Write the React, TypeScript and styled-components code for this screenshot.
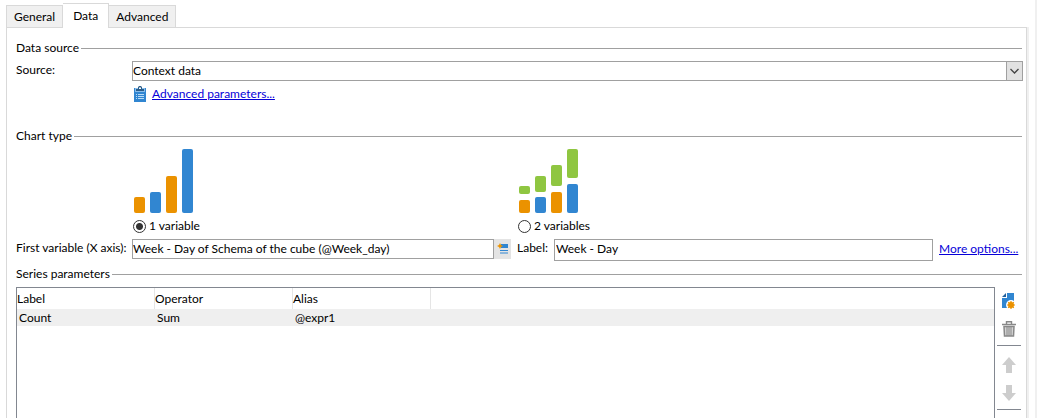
import React, { useState } from 'react';
import styled, { createGlobalStyle, css } from 'styled-components';

const Global = createGlobalStyle`
  *, *::before, *::after { box-sizing: border-box; }
  body {
    margin: 0;
    background: #fff;
    color: #000;
    font: 12px/16px Lato, "Segoe UI", sans-serif;
  }
  button, input, select { font: inherit; color: inherit; margin: 0; }
`;

const Page = styled.main`
  display: flex;
  flex-direction: column;
  height: 100vh;
  padding: 3px 8px 0 6px;
  border-right: 2px solid #f0f0f0;
  overflow: hidden;
`;

const TabList = styled.div`
  display: flex;
  align-items: flex-end;
`;

const Tab = styled.button<{ $active: boolean }>`
  height: 22px;
  padding: 0 7px;
  border: 1px solid #d9d9d9;
  border-bottom: 0;
  border-left-width: 0;
  background: #f0f0f0;
  line-height: 20px;
  white-space: nowrap;

  &:first-child { border-left-width: 1px; }

  ${({ $active }) =>
    $active &&
    css`
      height: 25px;
      margin-bottom: -1px;
      padding: 0 10px;
      background: #fff;
      z-index: 1;
    `}
`;

const Panel = styled.section`
  display: flex;
  flex-direction: column;
  flex: 1;
  min-height: 0;
  padding: 12px 3px 0 9px;
  border: 1px solid #d9d9d9;
  border-bottom: 0;
  box-shadow: 2px 0 0 #f0f0f0;
`;

const Heading = styled.h2`
  display: flex;
  align-items: center;
  gap: 2px;
  margin: 0;
  font-size: 12px;
  font-weight: 400;

  &::after {
    content: "";
    flex: 1;
    height: 1px;
    margin-right: 1px;
    background: #a0a0a0;
  }
`;

const SourceGrid = styled.div`
  display: grid;
  grid-template-columns: 116px minmax(0, 1fr);
  row-gap: 5px;
  margin: 5px 0 26px;
`;

const SelectBox = styled.div`
  position: relative;
  display: flex;
`;

const Select = styled.select`
  flex: 1;
  height: 20px;
  padding: 0 20px 0 0;
  border: 1px solid #a0a0a0;
  border-radius: 0;
  background: #fff;
  appearance: none;
`;

const DropMark = styled.span`
  position: absolute;
  inset: 0 0 0 auto;
  display: flex;
  align-items: center;
  justify-content: center;
  width: 17px;
  border: 1px solid #a0a0a0;
  background: #e1e1e1;
  pointer-events: none;
`;

const IconLink = styled.div`
  display: flex;
  align-items: center;
  gap: 4px;
  grid-column: 2;
`;

const Link = styled.a`
  color: #0600d8;
  text-decoration: underline;
  white-space: nowrap;
`;

const Columns = styled.div`
  display: grid;
  grid-template-columns: minmax(0, 495fr) minmax(0, 506fr);
  column-gap: 6px;
`;

const ChartChoice = styled.label<{ $indent?: boolean }>`
  display: flex;
  flex-direction: column;
  gap: 5px;
  padding: 5px 0 5px ${({ $indent }) => ($indent ? 117 : 1)}px;
`;

const RadioLine = styled.span`
  display: flex;
  align-items: center;
  gap: 3px;
`;

const Radio = styled.input`
  width: 13px;
  height: 13px;
  border: 1px solid #333;
  border-radius: 50%;
  background: #fff;
  appearance: none;

  &:checked {
    background: radial-gradient(circle, #333 3px, #fff 4px);
  }
`;

const Field = styled.div`
  display: flex;
  align-items: flex-start;
`;

const FieldLabel = styled.label<{ $width?: number }>`
  flex: none;
  width: ${({ $width }) => ($width ? `${$width}px` : 'auto')};
  line-height: 18px;
  white-space: nowrap;
`;

const TextInput = styled.input<{ $tall?: boolean }>`
  flex: 1;
  min-width: 0;
  height: ${({ $tall }) => ($tall ? 22 : 20)}px;
  padding: ${({ $tall }) => ($tall ? '0 1px 3px' : '0 0 1px')};
  border: 1px solid #a0a0a0;
`;

const PickButton = styled.button`
  display: flex;
  align-items: center;
  justify-content: center;
  width: 17px;
  height: 20px;
  padding: 0;
  border: 0;
  background: #e4e4e4;
`;

const MoreLink = styled(Link)`
  width: 84px;
  margin-left: 6px;
  line-height: 20px;
`;

const Series = styled.div`
  display: flex;
  flex: 1;
  gap: 2px;
  min-height: 0;
  margin-top: 5px;
`;

const SeriesHeading = styled(Heading)`
  margin-top: 5px;
`;

const TableFrame = styled.div`
  flex: 1;
  border: 1px solid #828790;
  border-bottom: 0;
`;

const Table = styled.table`
  width: 100%;
  border-spacing: 0;
  table-layout: fixed;

  th, td { text-align: left; font-weight: 400; }
  th { height: 21px; padding: 1px 0 0; border-right: 1px solid #e5e5e5; }
  th:last-child { border-right: 0; }
  td { height: 17px; padding: 0 2px; background: #efefef; line-height: 16px; }
`;

const Column = styled.col`
  width: 138px;
`;

const SideBar = styled.div`
  display: flex;
  flex-direction: column;
  align-items: center;
  width: 24px;
  margin-right: 2px;
  padding-top: 6px;
  gap: 12px;
`;

const ToolButton = styled.button`
  display: flex;
  padding: 0;
  border: 0;
  background: none;
`;

const Divider = styled.hr`
  align-self: stretch;
  height: 1px;
  margin: -4px 0 -1px;
  border: 0;
  background: #828790;
`;

const BLUE = '#3186d1';
const ORANGE = '#eb9200';
const GREEN = '#8fc641';

type Bar = [x: number, y: number, height: number, color: string];

const ONE_VARIABLE: Bar[] = [
  [1, 48, 16, ORANGE],
  [17, 43, 21, BLUE],
  [33, 27, 37, ORANGE],
  [49, 0, 64, BLUE],
];

const TWO_VARIABLES: Bar[] = [
  [1, 37, 8, GREEN],
  [1, 51, 13, ORANGE],
  [17, 27, 16, GREEN],
  [17, 48, 16, BLUE],
  [33, 16, 21, GREEN],
  [33, 43, 21, ORANGE],
  [49, 0, 29, GREEN],
  [49, 35, 29, BLUE],
];

const BarChart = ({ bars }: { bars: Bar[] }) => (
  <svg width="60" height="64" aria-hidden="true">
    {bars.map(([x, y, height, color]) => (
      <rect key={`${x}-${y}`} x={x} y={y} width="11" height={height} rx="2" fill={color} />
    ))}
  </svg>
);

const ClipboardIcon = () => (
  <svg width="16" height="16" viewBox="0 0 16 16" aria-hidden="true">
    <path d="M2 2h12v14H2z" fill={BLUE} />
    <path d="M3 2h10v4H3z" fill="#8abdea" />
    <path d="M4 3h2V1.500C6 .5 7 0 8 0s2 .5 2 1.500V3h2v2H4z" fill="#2a5c88" />
    <path d="M7 1.500h2V3H7z" fill="#fff" />
    <path d="M4 8.500h1M6 8.500h6M4 10.500h1M6 10.500h6M4 12.500h1M6 12.500h6" stroke="#b9dcf7" />
  </svg>
);

const PickIcon = () => (
  <svg width="12" height="12" viewBox="0 0 12 12" aria-hidden="true">
    <path d="M4 1h7v4H4z" fill={BLUE} />
    <path d="M3 7.500h8M3 10h8" stroke={BLUE} strokeWidth="1.200" />
    <path d="M3 0l1 2 2 1-2 1-1 2-1-2-2-1 2-1z" fill={ORANGE} />
  </svg>
);

const NewIcon = () => (
  <svg width="16" height="16" viewBox="0 0 16 16" aria-hidden="true">
    <path d="M6 0h7v8L7 11v4H1V5h5z" fill={BLUE} />
    <path d="M1 4L5 0v4z" fill="#1f5f9c" />
    <circle cx="10" cy="12" r="5" fill="#fff" />
    <circle cx="10" cy="12" r="3" fill={ORANGE} />
    <path
      d="M10 8v8M6 12h8M7.200 9.200l5.600 5.600M12.800 9.200l-5.600 5.600"
      stroke={ORANGE}
      strokeWidth="1.200"
    />
  </svg>
);

const TrashIcon = () => (
  <svg width="16" height="16" viewBox="0 0 16 16" fill="none" aria-hidden="true">
    <path d="M1 3.500h14" stroke="#888" strokeWidth="1.500" />
    <path d="M5.500 3V.8h5V3" stroke="#888" strokeWidth="1.400" />
    <path d="M3 5.500h10L12.500 15h-9z" fill="#d4d4d4" stroke="#888" strokeWidth="1.500" />
    <path d="M6 6v9M8 6v9M10 6v9" stroke="#888" />
  </svg>
);

const ArrowIcon = ({ down = false }: { down?: boolean }) => (
  <svg width="16" height="16" viewBox="0 0 16 16" aria-hidden="true">
    <path
      d={down ? 'M5 0h6v8h4l-7 8-7-8h4z' : 'M5 16h6V8h4L8 0 1 8h4z'}
      fill="#cdcdcd"
    />
  </svg>
);

const TABS = ['General', 'Data', 'Advanced'];

export default function App() {
  const [tab, setTab] = useState('Data');
  const [variables, setVariables] = useState(1);

  return (
    <>
      <Global />
      <Page>
        <TabList role="tablist">
          {TABS.map((name) => (
            <Tab
              key={name}
              role="tab"
              aria-selected={tab === name}
              $active={tab === name}
              onClick={() => setTab(name)}
            >
              {name}
            </Tab>
          ))}
        </TabList>
        <Panel>
          <Heading>Data source</Heading>
          <SourceGrid>
            <FieldLabel htmlFor="source">Source:</FieldLabel>
            <SelectBox>
              <Select id="source" defaultValue="context">
                <option value="context">Context data</option>
              </Select>
              <DropMark>
                <svg width="9" height="6" viewBox="0 0 9 6" fill="none" aria-hidden="true">
                  <path d="M.5 1l4 4 4-4" stroke="#444" strokeWidth="1.300" />
                </svg>
              </DropMark>
            </SelectBox>
            <IconLink>
              <ClipboardIcon />
              <Link href="#parameters">Advanced parameters...</Link>
            </IconLink>
          </SourceGrid>

          <Heading>Chart type</Heading>
          <Columns>
            <ChartChoice $indent>
              <BarChart bars={ONE_VARIABLE} />
              <RadioLine>
                <Radio
                  type="radio"
                  name="variables"
                  checked={variables === 1}
                  onChange={() => setVariables(1)}
                />
                1 variable
              </RadioLine>
            </ChartChoice>
            <ChartChoice>
              <BarChart bars={TWO_VARIABLES} />
              <RadioLine>
                <Radio
                  type="radio"
                  name="variables"
                  checked={variables === 2}
                  onChange={() => setVariables(2)}
                />
                2 variables
              </RadioLine>
            </ChartChoice>
            <Field>
              <FieldLabel htmlFor="first" $width={116}>First variable (X axis):</FieldLabel>
              <TextInput id="first" defaultValue="Week - Day of Schema of the cube (@Week_day)" />
              <PickButton aria-label="Choose variable">
                <PickIcon />
              </PickButton>
            </Field>
            <Field>
              <FieldLabel htmlFor="label" $width={37}>Label:</FieldLabel>
              <TextInput id="label" $tall defaultValue="Week - Day" />
              <MoreLink href="#more">More options...</MoreLink>
            </Field>
          </Columns>

          <SeriesHeading>Series parameters</SeriesHeading>
          <Series>
            <TableFrame>
              <Table>
                <colgroup>
                  <Column />
                  <Column />
                  <Column />
                  <col />
                </colgroup>
                <thead>
                  <tr>
                    <th>Label</th>
                    <th>Operator</th>
                    <th>Alias</th>
                    <th />
                  </tr>
                </thead>
                <tbody>
                  <tr>
                    <td>Count</td>
                    <td>Sum</td>
                    <td>@expr1</td>
                    <td />
                  </tr>
                </tbody>
              </Table>
            </TableFrame>
            <SideBar role="toolbar" aria-label="Series">
              <ToolButton aria-label="Add"><NewIcon /></ToolButton>
              <ToolButton aria-label="Delete"><TrashIcon /></ToolButton>
              <Divider />
              <ToolButton aria-label="Move up"><ArrowIcon /></ToolButton>
              <ToolButton aria-label="Move down"><ArrowIcon down /></ToolButton>
              <Divider />
            </SideBar>
          </Series>
        </Panel>
      </Page>
    </>
  );
}
